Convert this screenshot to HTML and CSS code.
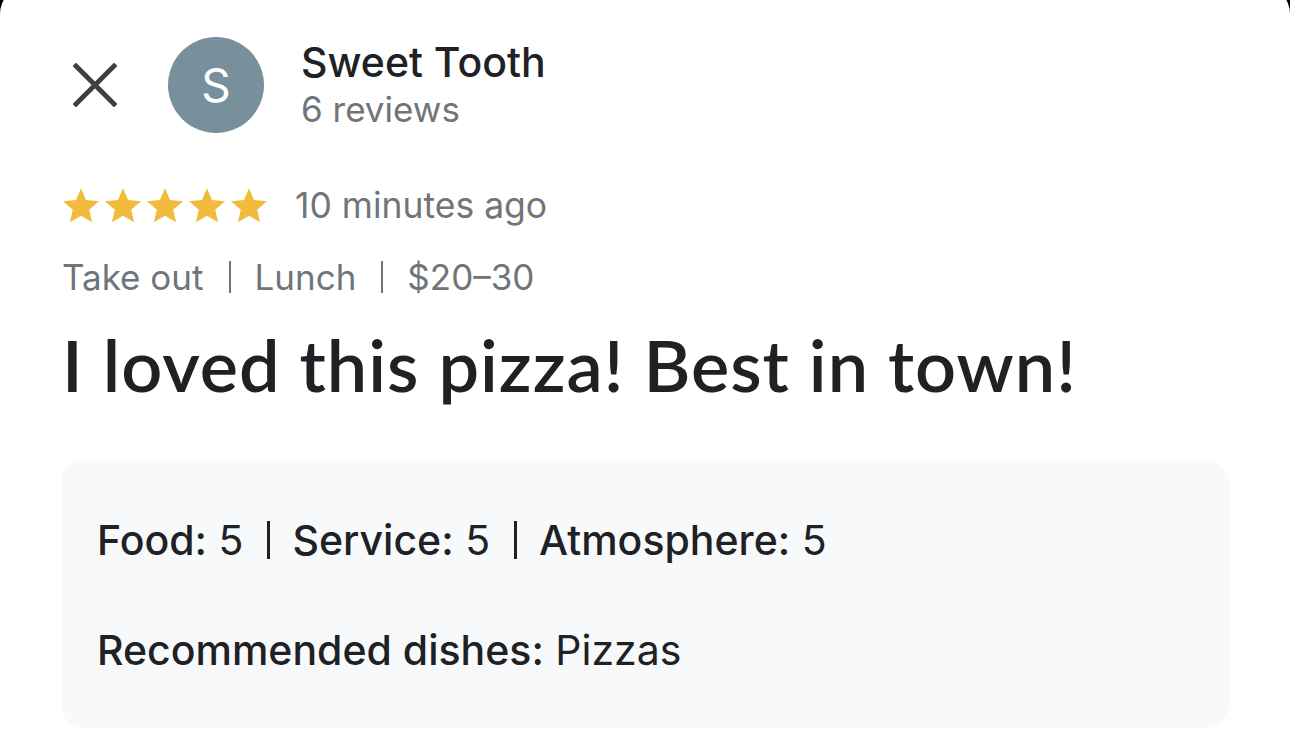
FILE: index.html
```html
<!DOCTYPE html>
<html lang="en">
<head>
<meta charset="utf-8">
<title>Review</title>
<link rel="stylesheet" href="styles.css">
</head>
<body>
<main class="sheet">
  <header class="head">
    <button class="close" aria-label="Close">
      <svg viewBox="0 0 44 44" width="44" height="44"><path d="M3 3L41 41M41 3L3 41" stroke="#3c4043" stroke-width="4.8" stroke-linecap="square" fill="none"/></svg>
    </button>
    <div class="avatar">S</div>
    <div class="who">
      <div class="name">Sweet Tooth</div>
      <div class="count">6 reviews</div>
    </div>
  </header>

  <div class="rating">
    <div class="stars">
      <svg class="star" viewBox="2 2 20 19.27"><path d="M12 17.27L18.18 21l-1.64-7.03L22 9.24l-7.19-.61L12 2 9.19 8.63 2 9.24l5.46 4.730L5.82 21z"/></svg>
      <svg class="star" viewBox="2 2 20 19.27"><path d="M12 17.27L18.18 21l-1.64-7.03L22 9.24l-7.19-.61L12 2 9.19 8.63 2 9.24l5.46 4.73L5.82 21z"/></svg>
      <svg class="star" viewBox="2 2 20 19.27"><path d="M12 17.27L18.18 21l-1.64-7.03L22 9.24l-7.19-.61L12 2 9.19 8.63 2 9.24l5.46 4.73L5.82 21z"/></svg>
      <svg class="star" viewBox="2 2 20 19.27"><path d="M12 17.27L18.18 21l-1.64-7.03L22 9.24l-7.19-.61L12 2 9.19 8.63 2 9.24l5.46 4.73L5.82 21z"/></svg>
      <svg class="star" viewBox="2 2 20 19.27"><path d="M12 17.27L18.18 21l-1.64-7.03L22 9.24l-7.19-.61L12 2 9.19 8.63 2 9.24l5.46 4.73L5.82 21z"/></svg>
    </div>
    <span class="when">10 minutes ago</span>
  </div>

  <div class="meta">
    <span>Take out</span><span class="sep"></span><span>Lunch</span><span class="sep"></span><span>$20–30</span>
  </div>

  <h1 class="title">I loved this pizza! Best in town!</h1>

  <section class="details">
    <p class="line"><b>Food:</b>&nbsp;5<span class="sep dark"></span><b>Service:</b>&nbsp;5<span class="sep dark"></span><b>Atmosphere:</b>&nbsp;5</p>
    <p class="line"><b>Recommended dishes:</b>&nbsp;Pizzas</p>
  </section>
</main>
</body>
</html>
```

FILE: styles.css
```css
html, body {
  margin: 0;
  padding: 0;
  height: 100%;
  overflow: hidden;
  background: #000;
}

.sheet {
  margin-top: -14px;
  height: 800px;
  background: #fff;
  border-radius: 28px 28px 0 0;
  padding: 51px 0 0 0;
  box-sizing: border-box;
  display: flex;
  flex-direction: column;
  font-family: Inter, "Liberation Sans", sans-serif;
  color: #202124;
}

.head {
  display: flex;
  align-items: center;
  padding-left: 73px;
  height: 96px;
}

.close {
  width: 44px;
  height: 44px;
  padding: 0;
  border: 0;
  background: none;
  display: flex;
}

.avatar {
  width: 96px;
  height: 96px;
  border-radius: 50%;
  background: #78909c;
  color: #fff;
  font-size: 46px;
  display: flex;
  align-items: center;
  justify-content: center;
  margin-left: 51px;
}

.who {
  margin-left: 37px;
  display: flex;
  flex-direction: column;
}

.name {
  font-size: 41px;
  line-height: 48px;
  font-weight: 500;
  color: #202124;
}

.count {
  font-size: 35px;
  line-height: 46px;
  color: #70757a;
}

.rating {
  display: flex;
  align-items: center;
  margin-top: 55px;
  padding-left: 63px;
  height: 35px;
}

.stars {
  display: flex;
  gap: 6px;
}

.star {
  width: 36px;
  height: 35px;
  fill: #f3bb3c;
}

.when {
  margin-left: 28px;
  font-size: 35.5px;
  color: #70757a;
}

.meta {
  display: flex;
  align-items: center;
  margin-top: 32px;
  padding-left: 62px;
  font-size: 35px;
  line-height: 44px;
  color: #70757a;
}

.sep {
  display: inline-block;
  width: 2px;
  height: 32px;
  background: #70757a;
  margin: 0 24px 0 25px;
}

.title {
  margin: 23px 0 0 0;
  padding-left: 62px;
  font-family: Lato, Inter, sans-serif;
  font-weight: 600;
  font-size: 72px;
  line-height: 84px;
  letter-spacing: 1px;
  color: #202124;
}

.details {
  margin: 54px 0 0 61px;
  width: 1168px;
  height: 268px;
  box-sizing: border-box;
  background: #f8f9fb;
  border-radius: 24px;
  padding: 55px 0 0 36px;
}

.line {
  margin: 0;
  display: flex;
  align-items: center;
  font-size: 41px;
  line-height: 50px;
  color: #202124;
}

.line + .line {
  margin-top: 60px;
}

.line b {
  font-weight: 500;
}

.sep.dark {
  background: #202124;
  width: 3px;
  height: 38px;
  margin: 0 22px 0 24px;
}
```
